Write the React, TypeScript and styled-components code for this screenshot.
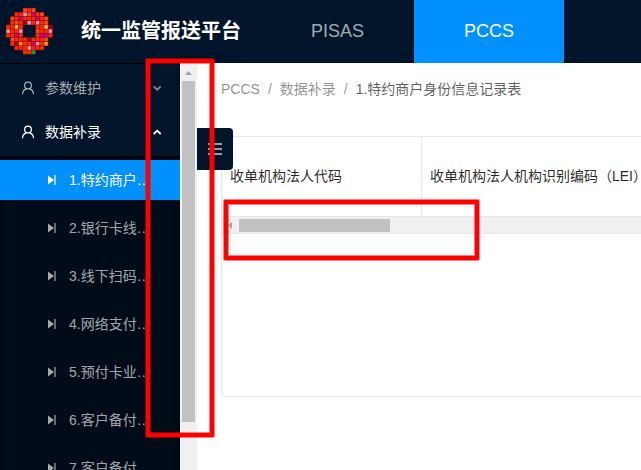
import React from 'react';
import styled, { createGlobalStyle } from 'styled-components';

const GlobalStyle = createGlobalStyle`
  * { box-sizing: border-box; }
  body {
    margin: 0;
    background: #fff;
    font: 14px/22px "Liberation Sans", "Noto Sans CJK SC", sans-serif;
    overflow: hidden;
  }
`;

const Page = styled.div`
  position: relative;
  width: 641px;
  height: 470px;
  overflow: hidden;
  display: flex;
  flex-direction: column;
`;

const Header = styled.header`
  display: flex;
  flex: none;
  height: 63px;
  background: #001529;
`;

const Brand = styled.div`
  display: flex;
  width: 261px;
  padding: 8px 0 0 6px;
`;

const Title = styled.h1`
  margin: 8px 0 0 28px;
  color: #fff;
  font-size: 20px;
  line-height: 30px;
  font-weight: 700;
  white-space: nowrap;
`;

const Tab = styled.a<{ $active?: boolean }>`
  width: ${p => (p.$active ? 150 : 153)}px;
  height: 63px;
  text-align: center;
  font-size: 18px;
  line-height: 62px;
  color: ${p => (p.$active ? '#fff' : 'rgba(255,255,255,.65)')};
  background: ${p => (p.$active ? '#0091ff' : 'transparent')};
`;

const Body = styled.div`
  display: flex;
  height: 407px;
`;

const Sidebar = styled.nav`
  width: 180px;
  flex: none;
  overflow: hidden;
  background: #001529;
  border-top: 1px solid #000;
`;

const Group = styled.div<{ $open?: boolean }>`
  display: flex;
  align-items: center;
  height: ${p => (p.$open ? 40 : 48)}px;
  margin-bottom: ${p => (p.$open ? 4 : 0)}px;
  padding: 0 18px 0 21px;
  color: ${p => (p.$open ? '#fff' : 'rgba(255,255,255,.65)')};
`;

const GroupName = styled.span`
  flex: 1;
  margin-left: 10px;
`;

const SubMenu = styled.div`
  padding-top: 4px;
  height: 330px;
  background: #000c17;
  box-shadow: inset 0 3px 5px rgba(0,0,0,.6);
`;

const Item = styled.div<{ $active?: boolean }>`
  display: flex;
  align-items: center;
  height: 40px;
  margin-bottom: 8px;
  padding-left: 48px;
  color: ${p => (p.$active ? '#fff' : 'rgba(255,255,255,.65)')};
  background: ${p => (p.$active ? '#0091ff' : 'transparent')};
`;

const ItemName = styled.span`
  margin-left: 13px;
  white-space: nowrap;
`;

const ScrollTrack = styled.div`
  width: 17px;
  flex: none;
  margin-top: 1px;
  background: #f0f0f0;
  display: flex;
  flex-direction: column;
  align-items: center;
`;

const ArrowBox = styled.div`
  height: 17px;
  display: flex;
  align-items: center;
`;

const Thumb = styled.div`
  width: 13px;
  height: 341px;
  background: #c1c1c1;
`;

const Content = styled.main`
  position: relative;
  flex: 1;
  min-width: 0;
  padding: 15px 0 0 24px;
`;

const Breadcrumb = styled.div`
  display: flex;
  height: 22px;
  color: rgba(0,0,0,.45);
  white-space: nowrap;
`;

const Separator = styled.span`
  margin: 0 8px;
`;

const Current = styled.span`
  color: rgba(0,0,0,.65);
`;

const Toggle = styled.button`
  position: absolute;
  left: 0;
  top: 65px;
  width: 36px;
  height: 42px;
  padding: 0;
  border: 0;
  border-radius: 0 4px 4px 0;
  background: #001529;
  display: flex;
  align-items: center;
  justify-content: center;
`;

const Table = styled.section`
  width: 460px;
  height: 261px;
  margin-top: 36px;
  border: 1px solid #e8e8e8;
  border-radius: 4px 0 0 4px;
`;

const HeadRow = styled.div`
  display: flex;
  height: 79px;
  color: rgba(0,0,0,.85);
`;

const HeadCell = styled.div<{ $width: number }>`
  flex: none;
  width: ${p => p.$width}px;
  padding: 28px 8px 0;
  border-right: 1px solid #e8e8e8;
  white-space: nowrap;
`;

const HScroll = styled.div`
  display: flex;
  align-items: center;
  height: 18px;
  border: solid #e8e8e8;
  border-width: 1px 0;
  background: #f0f0f0;
`;

const HArrow = styled.div`
  display: flex;
  width: 17px;
  padding-left: 6px;
`;

const HThumb = styled.div`
  width: 151px;
  height: 13px;
  background: #c1c1c1;
`;

/* Red callout frames drawn over the page */
const Callout = styled.div<{ $x: number; $y: number; $w: number; $h: number }>`
  position: absolute;
  left: ${p => p.$x}px;
  top: ${p => p.$y}px;
  width: ${p => p.$w}px;
  height: ${p => p.$h}px;
  border: 4px solid #f00;
  border-radius: 1px;
  box-shadow: 0 0 0 1px rgba(255,0,0,.5), inset 0 0 0 1px rgba(255,0,0,.5);
  pointer-events: none;
`;

const COLORS: Record<string, string> = {
  r: '#ff2a05', o: '#ff4a08', p: '#f090b0', m: '#cc0088',
  d: '#a80008', y: '#ffc04a', a: '#ff9500', g: '#00a54f',
};

const LOGO = [
  '....oro....',
  '..rrpomro..',
  '.ormrrrmro.',
  '.rordprpro.',
  'rryr...rryd',
  'prrp...orrp',
  'rrmr...rmmr',
  '.orrrdrrro.',
  '.rdarrmpra.',
  '..rrrprrr..',
  '....rrg....',
];

const Logo = () => (
  <svg width="47" height="47" viewBox="0 0 47 47">
    {LOGO.flatMap((row, y) =>
      [...row].map((c, x) => {
        if (c === '.') return null;
        const left = x * 4.22;
        const top = y * 4.2;
        return (
          <g key={`${x}-${y}`}>
            <rect x={left} y={top} width="4.4" height="4.4" fill="#a01812" />
            <rect x={left + 0.4} y={top + 0.4} width="3.5" height="3.5" fill={COLORS[c]} />
          </g>
        );
      }))}
  </svg>
);

const UserIcon = () => (
  <svg width="14" height="14" viewBox="0 0 14 14" fill="none" stroke="currentColor" strokeWidth="1.2">
    <circle cx="7" cy="4.5" r="3.4" />
    <path d="M1.5 13.3c.1-3 2-4.8 4.1-5.4M12.5 13.3c-.1-3-2-4.8-4.1-5.4" />
  </svg>
);

const Chevron = ({ up }: { up?: boolean }) => (
  <svg width="10" height="8" viewBox="0 0 10 8" fill="none" stroke="currentColor" strokeWidth="1.8" opacity={up ? 1 : 0.75}>
    <path d={up ? 'M1.7 6 5.2 2.7 8.7 6' : 'M1.7 2.4 5.2 5.7 8.7 2.4'} />
  </svg>
);

const StepIcon = () => (
  <svg width="8" height="10" viewBox="0 0 8 10" fill="currentColor">
    <path d="M0 .5 6 5 0 9.5Z" />
    <path d="M6 0h2v10H6z" opacity=".6" />
  </svg>
);

const items = ['1.特约商户', '2.银行卡线', '3.线下扫码', '4.网络支付', '5.预付卡业', '6.客户备付', '7.客户备付'];

export default function App() {
  return (
    <Page>
      <GlobalStyle />
      <Header>
        <Brand>
          <Logo />
          <Title>统一监管报送平台</Title>
        </Brand>
        <Tab>PISAS</Tab>
        <Tab $active>PCCS</Tab>
      </Header>
      <Body>
        <Sidebar>
          <Group>
            <UserIcon />
            <GroupName>参数维护</GroupName>
            <Chevron />
          </Group>
          <Group $open>
            <UserIcon />
            <GroupName>数据补录</GroupName>
            <Chevron up />
          </Group>
          <SubMenu>
            {items.map((name, i) => (
              <Item key={name} $active={i === 0}>
                <StepIcon />
                <ItemName>{name}…</ItemName>
              </Item>
            ))}
          </SubMenu>
        </Sidebar>
        <ScrollTrack>
          <ArrowBox>
            <svg width="7" height="4" viewBox="0 0 7 4"><path d="M0 4 3.5 0 7 4Z" fill="#a3a3a3" /></svg>
          </ArrowBox>
          <Thumb />
        </ScrollTrack>
        <Content>
          <Breadcrumb>
            <span>PCCS</span><Separator>/</Separator>
            <span>数据补录</span><Separator>/</Separator>
            <Current>1.特约商户身份信息记录表</Current>
          </Breadcrumb>
          <Table>
            <HeadRow>
              <HeadCell $width={200}>收单机构法人代码</HeadCell>
              <HeadCell $width={260}>收单机构法人机构识别编码（LEI）</HeadCell>
            </HeadRow>
            <HScroll>
              <HArrow>
                <svg width="4" height="7" viewBox="0 0 4 7"><path d="M4 0 0 3.5 4 7Z" fill="#a3a3a3" /></svg>
              </HArrow>
              <HThumb />
            </HScroll>
          </Table>
          <Toggle aria-label="menu">
            <svg width="16" height="12" viewBox="0 0 16 12" stroke="#c5cace" strokeWidth="1.6">
              <path d="M1 1h14M1 6h14M1 11h14" />
            </svg>
          </Toggle>
        </Content>
      </Body>
      <Callout $x={146} $y={59} $w={68} $h={378} />
      <Callout $x={224} $y={200} $w={255} $h={60} />
    </Page>
  );
}
